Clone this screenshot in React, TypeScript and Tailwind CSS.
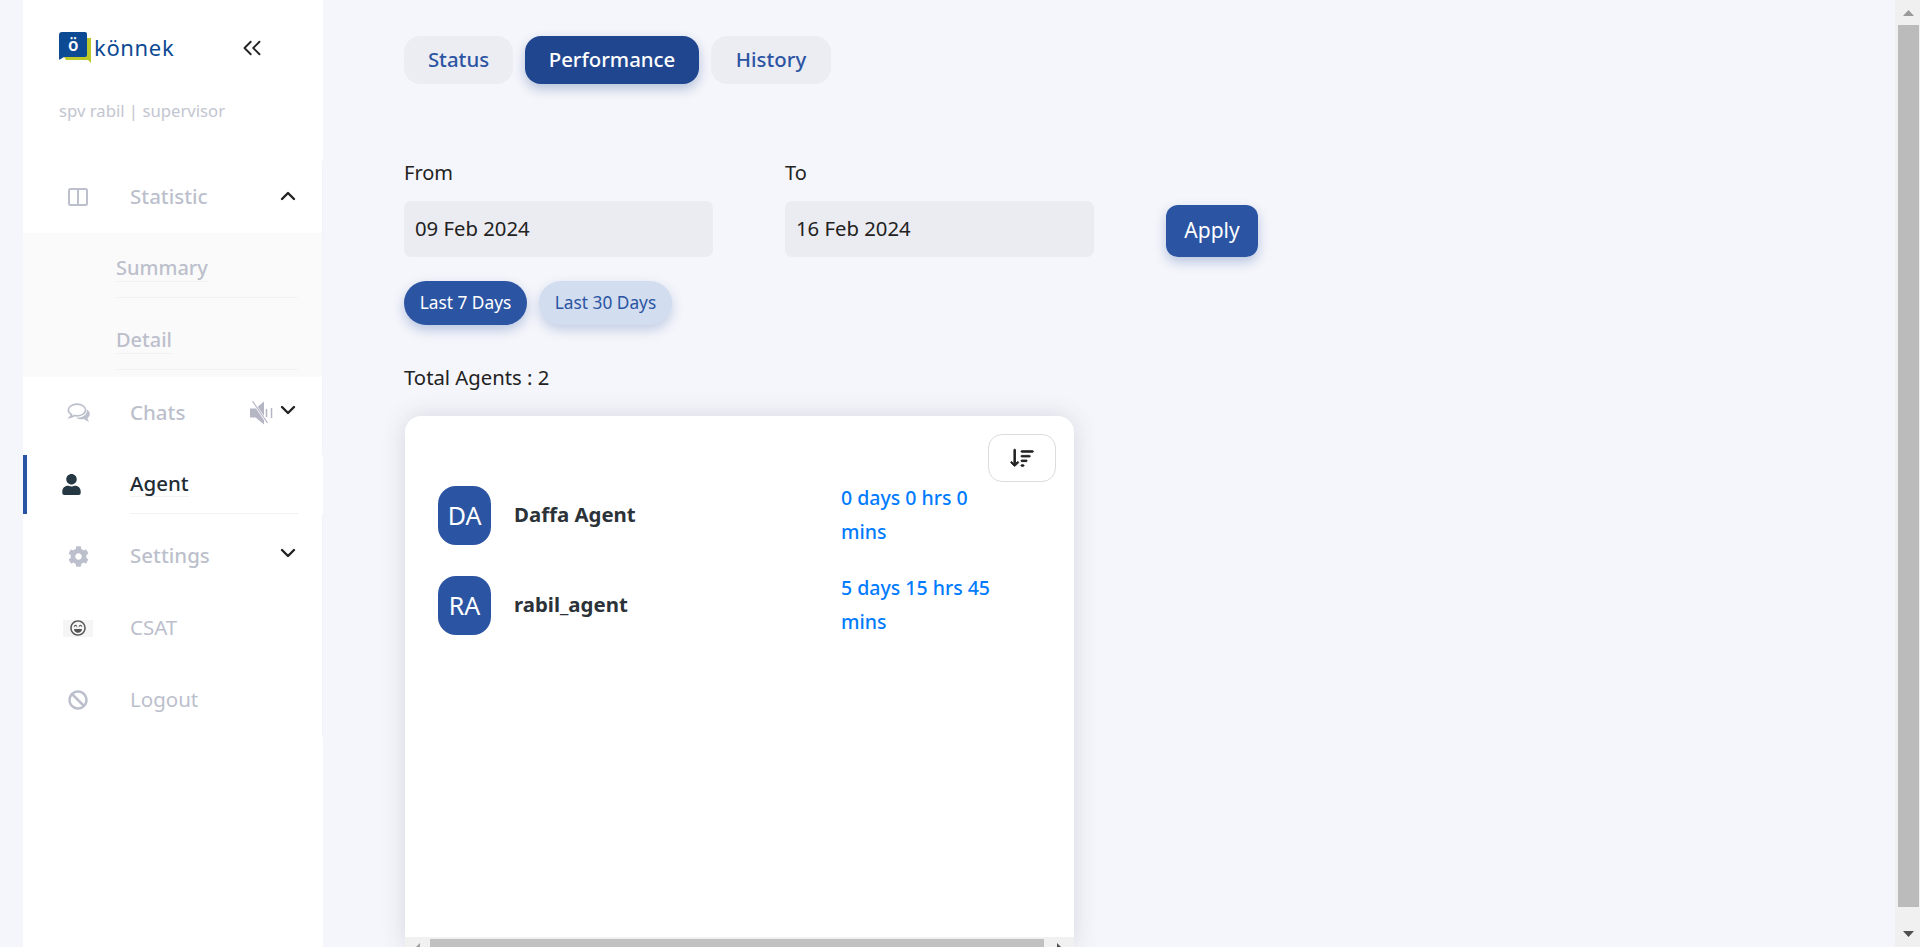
import { ChevronDown, ChevronUp, ChevronsLeft } from "lucide-react";
import { FaBan, FaCog, FaRegLaughBeam, FaUser } from "react-icons/fa";
import { BsSortDown } from "react-icons/bs";

function Logo() {
  return (
    <div className="flex items-center h-[31px]">
      <div className="relative w-[33px] h-[31px] mr-[2px]">
        <svg width="33" height="31" viewBox="0 0 33 31" className="block">
          <path d="M5 6h27v25l-3-3H7l-2-3z" fill="#bcc928" />
          <path d="M3 0h23a2 2 0 0 1 2 2v21a2 2 0 0 1-2 2H5l-4 2.5H0V3a3 3 0 0 1 3-3z" fill="#0d4a94" />
        </svg>
        <span className="absolute left-[9px] top-[1px] text-[17px] leading-[24px] font-semibold text-white">ö</span>
      </div>
      <span className="text-[22px] leading-[31px] tracking-[0.65px] text-[#0d4a94]">könnek</span>
    </div>
  );
}

function NavRow({ icon, label, right, medium = true }: { icon: React.ReactNode; label: string; right?: React.ReactNode; medium?: boolean }) {
  return (
    <div className="h-[72px] flex items-center pl-[35px] pr-[22px]">
      <div className="w-[40px] flex justify-center text-[#bcbfcc]">{icon}</div>
      <div className={`ml-[32px] flex-1 text-[20.5px] text-[#bcbfcc] pb-[2px] ${medium ? "font-medium" : "font-normal"}`}>{label}</div>
      {right}
    </div>
  );
}

function SubRow({ label }: { label: string }) {
  return (
    <div className="h-[72px] pl-[93px] pr-[24px]">
      <div className="h-[65px] flex items-center pt-[7px] border-b border-[#f2f2f4]">
        <span className="text-[20px] font-medium text-[#bcbfcc] leading-[26px] border-b border-[#f2f2f4]">{label}</span>
      </div>
    </div>
  );
}

function ColumnsIcon() {
  return (
    <svg width="20" height="18" viewBox="0 0 20 18" fill="none" stroke="currentColor" strokeWidth="2" className="block">
      <rect x="1" y="1" width="18" height="16" rx="1.5" />
      <path d="M10 1v16" />
    </svg>
  );
}

function ChatIcon() {
  return (
    <svg width="23" height="20" viewBox="0 0 23 20" className="block">
      <path d="M10 1.2c4.8 0 8.6 2.5 8.6 5.8s-3.8 5.8-8.6 5.8c-.9 0-1.8-.1-2.6-.3-1.4 1-3 1.6-4.6 1.9.9-.9 1.5-1.9 1.7-3C2.400 10.300 1.300 8.800 1.300 7 1.300 3.700 5.200 1.200 10 1.200z" fill="none" stroke="currentColor" strokeWidth="1.7" />
      <path d="M20 6.500c1.800 1.100 2.800 2.700 2.800 4.400 0 1.600-.9 3-2.400 4 .2 1.400.9 2.700 1.700 3.900-2.100-.5-3.800-1.500-5-2.700-.8.200-1.500.200-2.300.200-2.200 0-4.200-.6-5.600-1.600 5.400.2 11.200-2.200 10.800-8.200z" fill="currentColor" />
    </svg>
  );
}

function MuteIcon() {
  return (
    <svg width="23" height="24" viewBox="0 0 23 24" className="block">
      <path d="M0 7.500h5.500L14 .5v23L5.500 16.500H0z" fill="#b4b6c4" />
      <path d="M16.500 8v8M21.500 7v10" stroke="#b4b6c4" strokeWidth="1.500" fill="none" />
      <path d="M3 1l15 22" stroke="#ffffff" strokeWidth="2.400" fill="none" />
      <path d="M2.500 0l15 22" stroke="#b4b6c4" strokeWidth="1.200" fill="none" />
    </svg>
  );
}

function Sidebar() {
  return (
    <aside className="w-[300px] shrink-0 bg-white h-full">
      <div className="pl-[36px] pt-[32px] pr-[56px] flex items-center justify-between">
        <Logo />
        <ChevronsLeft size={30} strokeWidth={1.5} className="text-[#222]" />
      </div>
      <div className="pl-[36px] mt-[36px] h-[24px] leading-[24px] text-[16.7px] text-[#c3c5d0]">spv rabil | supervisor</div>
      <nav className="mt-[38px] border-r border-[#f3f3f6] h-[576px]">
        <NavRow
          icon={<ColumnsIcon />}
          label="Statistic"
          right={<ChevronUp size={24} strokeWidth={2.4} className="text-[#222] -mt-[3px]" />}
        />
        <div className="bg-[#fafafa]">
          <SubRow label="Summary" />
          <SubRow label="Detail" />
        </div>
        <NavRow
          icon={<ChatIcon />}
          label="Chats"
          right={
            <div className="flex items-center -mt-[6px]">
              <div className="mt-[6px]"><MuteIcon /></div>
              <ChevronDown size={24} strokeWidth={2.4} className="text-[#222] ml-[3px]" />
            </div>
          }
        />
        <div className="h-[59px] my-[6px] -mr-px border-l-4 border-[#2a53a3] bg-white flex items-center pl-[24px]">
          <div className="w-[40px] flex justify-center text-[#263844]"><FaUser size={21} /></div>
          <div className="ml-[39px] flex-1 h-full flex items-center mr-[24px] border-b border-[#f2f2f4]">
            <span className="text-[20.5px] font-medium text-[#222b33] leading-[26px] border-b border-[#f2f2f4] -mt-[2px]">Agent</span>
          </div>
        </div>
        <NavRow
          icon={<FaCog size={21} />}
          label="Settings"
          right={<ChevronDown size={24} strokeWidth={2.4} className="text-[#222] -mt-[6px]" />}
        />
        <NavRow
          icon={
            <div className="w-[30px] h-[17px] bg-[#f5f5f5] flex items-center justify-center text-[#555]">
              <FaRegLaughBeam size={16} />
            </div>
          }
          label="CSAT"
          medium={false}
        />
        <NavRow icon={<FaBan size={20} />} label="Logout" medium={false} />
      </nav>
    </aside>
  );
}

function Tab({ label, active, w }: { label: string; active?: boolean; w: string }) {
  return (
    <button
      className={`${w} h-[48px] rounded-[16px] text-[20.4px] font-medium pb-[2px] ${
        active ? "bg-[#20468f] text-white shadow-[0_5px_12px_rgba(32,70,143,0.3)]" : "bg-[#ecedf2] text-[#2b54a3]"
      }`}
    >
      {label}
    </button>
  );
}

function DateField({ label, value }: { label: string; value: string }) {
  return (
    <div className="w-[309px]">
      <div className="h-[24px] leading-[24px] text-[20px] text-[#222] pt-px">{label}</div>
      <div className="mt-[17px] h-[56px] rounded-[7px] bg-[#ebecf1] pl-[11px] pb-[2px] flex items-center text-[20.3px] text-[#222]">{value}</div>
    </div>
  );
}

function AgentRow({ initials, name, time }: { initials: string; name: string; time: [string, string] }) {
  return (
    <div className="flex items-center h-[59px] pl-[33px]">
      <div className="w-[53px] h-[59px] rounded-[18px] bg-[#2b54a3] flex items-center justify-center text-white text-[25px] shrink-0">{initials}</div>
      <div className="ml-[23px] w-[327px] font-bold text-[20.4px] text-[#2b3238] pb-[2px]">{name}</div>
      <div className="text-[#007bff] text-[19.5px] font-medium leading-[34px] pb-[2px]">
        {time[0]}
        <br />
        {time[1]}
      </div>
    </div>
  );
}

function Arrow({ up, color }: { up?: boolean; color: string }) {
  return (
    <svg width="11" height="6" viewBox="0 0 11 6" className="block">
      <path d={up ? "M5.5 0L11 6H0z" : "M0 0h11L5.5 6z"} fill={color} />
    </svg>
  );
}

function Card() {
  return (
    <section className="ml-px mt-[27px] w-[669px] flex-1 min-h-0 bg-white rounded-t-[16px] shadow-[0_0_24px_rgba(60,60,90,0.16)] flex flex-col">
      <div className="flex-1">
        <div className="pt-[18px] pr-[18px] flex justify-end">
          <button className="w-[68px] h-[48px] rounded-[14px] bg-white border border-[#dcdcdc] flex items-center justify-center text-[#222]">
            <BsSortDown size={25} stroke="currentColor" strokeWidth={0.6} />
          </button>
        </div>
        <div className="mt-[4px] flex flex-col gap-[31px]">
          <AgentRow initials="DA" name="Daffa Agent" time={["0 days 0 hrs 0", "mins"]} />
          <AgentRow initials="RA" name="rabil_agent" time={["5 days 15 hrs 45", "mins"]} />
        </div>
      </div>
      <div className="h-[10px] bg-[#f1f1f1] flex items-start overflow-hidden">
        <div className="w-[25px] h-full flex justify-center items-end">
          <svg width="4" height="4" viewBox="0 0 4 4" className="block"><path d="M4 0v4H0z" fill="#a0a0a0" /></svg>
        </div>
        <div className="flex-1 h-[8px] mt-[2px] bg-[#c1c1c1]" />
        <div className="w-[30px] h-full flex justify-center items-end">
          <svg width="4" height="4" viewBox="0 0 4 4" className="block"><path d="M0 0v4h4z" fill="#505050" /></svg>
        </div>
      </div>
    </section>
  );
}

export default function App() {
  return (
    <div className="h-[947px] w-full overflow-hidden flex bg-[#f5f6fb] font-['Noto_Sans',sans-serif]">
      <div className="w-[23px] shrink-0" />
      <Sidebar />
      <main className="flex-1 min-w-0 flex flex-col pl-[81px] pt-[36px]">
        <div className="flex gap-[12px]">
          <Tab label="Status" w="w-[109px]" />
          <Tab label="Performance" active w="w-[174px]" />
          <Tab label="History" w="w-[120px]" />
        </div>
        <div className="mt-[76px] flex items-end">
          <DateField label="From" value="09 Feb 2024" />
          <div className="w-[72px]" />
          <DateField label="To" value="16 Feb 2024" />
          <button className="ml-[72px] w-[92px] h-[52px] rounded-[12px] bg-[#2b54a3] text-white text-[21px] shadow-[0_5px_12px_rgba(43,84,163,0.3)]">Apply</button>
        </div>
        <div className="mt-[24px] flex gap-[12px]">
          <button className="w-[123px] h-[44px] rounded-full bg-[#2b54a3] text-white text-[17.300px] shadow-[0_5px_12px_rgba(43,84,163,0.3)]">Last 7 Days</button>
          <button className="w-[133px] h-[44px] rounded-full bg-[#d2ddef] text-[#2b54a3] text-[17.300px] shadow-[0_5px_12px_rgba(43,84,163,0.25)]">Last 30 Days</button>
        </div>
        <div className="mt-[40px] h-[24px] leading-[25px] text-[20.3px] text-[#222]">Total Agents : 2</div>
        <Card />
      </main>
      <div className="w-[25px] shrink-0 bg-[#f0f0f0] flex flex-col items-center pl-px">
        <div className="h-[25px] pt-[10px]"><Arrow up color="#9a9a9a" /></div>
        <div className="w-[21px] flex-1 bg-[#bbbbbb]" />
        <div className="h-[40px] pt-[24px]"><Arrow color="#505050" /></div>
      </div>
    </div>
  );
}
